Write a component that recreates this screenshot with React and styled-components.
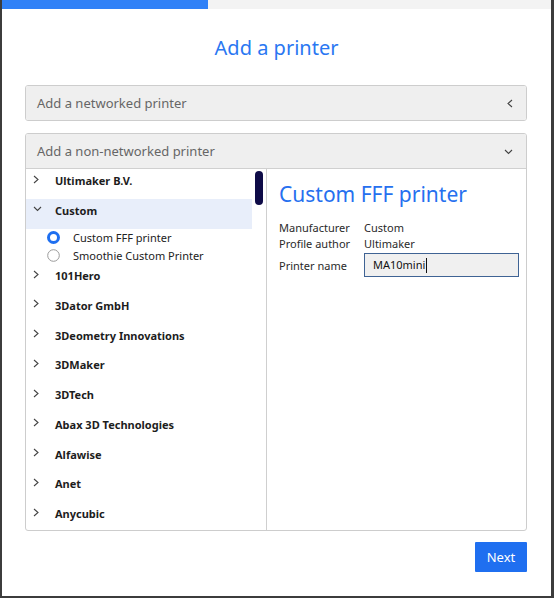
import React from 'react';
import styled, { createGlobalStyle } from 'styled-components';

const manufacturers = [
  { name: 'Ultimaker B.V.' },
  {
    name: 'Custom',
    open: true,
    printers: [
      { name: 'Custom FFF printer', selected: true },
      { name: 'Smoothie Custom Printer' }
    ]
  },
  { name: '101Hero' },
  { name: '3Dator GmbH' },
  { name: '3Deometry Innovations' },
  { name: '3DMaker' },
  { name: '3DTech' },
  { name: 'Abax 3D Technologies' },
  { name: 'Alfawise' },
  { name: 'Anet' },
  { name: 'Anycubic' }
];

const Chevron = ({ dir }) => {
  const points = {
    right: '1,1 5,4.5 1,8',
    left: '5,1 1,4.5 5,8',
    down: '1,2 4.5,5.5 8,2'
  }[dir];
  const size = dir === 'down' ? [9, 7] : [6, 9];
  return (
    <svg width={size[0]} height={size[1]} viewBox={`0 0 ${size[0]} ${size[1]}`}>
      <polyline points={points} fill="none" stroke="#444" strokeWidth="1.1" />
    </svg>
  );
};

const Radio = ({ checked }) => (
  <svg width="13" height="13" viewBox="0 0 13 13">
    {checked ? (
      <circle cx="6.5" cy="6.5" r="5" fill="#fff" stroke="#1e6ff0" strokeWidth="3" />
    ) : (
      <circle cx="6.5" cy="6.5" r="5.8" fill="#fff" stroke="#9a9a9a" strokeWidth="1" />
    )}
  </svg>
);

export default function App() {
  return (
    <>
      <GlobalStyle />
      <Window>
        <Progress>
          <ProgressFill style={{ width: 206 }} />
        </Progress>
        <Title>Add a printer</Title>
        <Body>
          <Section>
            <SectionHeader>
              Add a networked printer
              <Chevron dir="left" />
            </SectionHeader>
          </Section>
          <Section grow>
            <SectionHeader>
              Add a non-networked printer
              <Chevron dir="down" />
            </SectionHeader>
            <Content>
              <TreePane>
                <Scrollbar />
                {manufacturers.map(m => (
                  <React.Fragment key={m.name}>
                    <TreeRow active={m.open}>
                      <Arrow>
                        <Chevron dir={m.open ? 'down' : 'right'} />
                      </Arrow>
                      {m.name}
                    </TreeRow>
                    {m.printers &&
                      m.printers.map(p => (
                        <PrinterRow key={p.name}>
                          <Radio checked={p.selected} />
                          {p.name}
                        </PrinterRow>
                      ))}
                  </React.Fragment>
                ))}
              </TreePane>
              <DetailPane>
                <PrinterTitle>Custom FFF printer</PrinterTitle>
                <Fields>
                  <Label>Manufacturer</Label>
                  <Value>Custom</Value>
                  <Label>Profile author</Label>
                  <Value>Ultimaker</Value>
                  <Label tall>Printer name</Label>
                  <NameInput>
                    MA10mini
                    <Caret />
                  </NameInput>
                </Fields>
              </DetailPane>
            </Content>
          </Section>
        </Body>
        <Footer>
          <NextButton>Next</NextButton>
        </Footer>
      </Window>
    </>
  );
}

const GlobalStyle = createGlobalStyle`
  body {
    margin: 0;
    background: #3c3c3c;
    font-family: "Noto Sans", "Open Sans", sans-serif;
  }
`;

const Window = styled.div`
  margin-left: 2px;
  width: 549px;
  height: 596px;
  background: #fff;
  display: flex;
  flex-direction: column;
`;

const Progress = styled.div`
  height: 9px;
  background: #f3f3f3;
`;

const ProgressFill = styled.div`
  height: 100%;
  background: #3081f7;
`;

const Title = styled.h1`
  margin: 25px 0 0;
  text-align: center;
  font-size: 20px;
  font-weight: 400;
  line-height: 28px;
  color: #2a77f2;
`;

const Body = styled.div`
  flex: 1;
  display: flex;
  flex-direction: column;
  gap: 12px;
  padding: 23px 24px 0 23px;
`;

const Section = styled.div`
  display: flex;
  flex-direction: column;
  border: 1px solid #cdcdcd;
  border-radius: 3px;
  overflow: hidden;
  height: ${p => (p.grow ? '398px' : '36px')};
  box-sizing: border-box;
`;

const SectionHeader = styled.div`
  height: 34px;
  flex: none;
  display: flex;
  align-items: center;
  justify-content: space-between;
  padding: 0 13px 0 11px;
  background: #efefef;
  color: #666;
  font-size: 13px;
`;

const Content = styled.div`
  flex: 1;
  display: flex;
  border-top: 1px solid #d0d0d0;
`;

const TreePane = styled.div`
  position: relative;
  flex: none;
  width: 240px;
  border-right: 1px solid #cfcfcf;
  overflow: hidden;
`;

const Scrollbar = styled.div`
  position: absolute;
  top: 2px;
  right: 3px;
  width: 8px;
  height: 34px;
  border-radius: 4px;
  background: #0e0b47;
`;

const TreeRow = styled.div`
  height: 29.75px;
  width: 226px;
  box-sizing: border-box;
  display: flex;
  align-items: flex-start;
  padding-top: 4px;
  font-size: 11px;
  line-height: 16px;
  font-weight: 700;
  color: #1d1d1d;
  background: ${p => (p.active ? '#e8eefa' : 'transparent')};
`;

const Arrow = styled.span`
  width: 29px;
  padding-left: 7px;
  box-sizing: border-box;
  display: flex;
  align-items: center;
  height: 12px;
`;

const PrinterRow = styled.div`
  height: 17.75px;
  display: flex;
  align-items: center;
  gap: 13px;
  padding-left: 21px;
  font-size: 11px;
  color: #222;
`;

const DetailPane = styled.div`
  flex: 1;
  min-width: 0;
  padding: 10px 12px 0;
`;

const PrinterTitle = styled.h2`
  margin: 0 0 11px;
  font-size: 21px;
  font-weight: 400;
  line-height: 30px;
  color: #2670ef;
`;

const Fields = styled.div`
  display: grid;
  grid-template-columns: 85px 155px;
  font-size: 11px;
  line-height: 16px;
  color: #2a2a2a;
`;

const Label = styled.div`
  align-self: center;
  margin-top: ${p => (p.tall ? '2px' : 0)};
`;

const Value = styled.div``;

const NameInput = styled.div`
  margin-top: 1px;
  height: 24px;
  box-sizing: border-box;
  border: 1px solid #3f6394;
  background: #f0f0f0;
  padding: 0 8px;
  display: flex;
  align-items: center;
  color: #111;
  font-size: 11px;
`;

const Caret = styled.span`
  width: 1px;
  height: 15px;
  margin-left: 1px;
  background: #111;
`;

const Footer = styled.div`
  display: flex;
  justify-content: flex-end;
  padding: 11px 24px 24px 0;
`;

const NextButton = styled.button`
  width: 52px;
  height: 30px;
  border: none;
  border-radius: 1px;
  background: #1f6ff0;
  color: #fff;
  font-family: inherit;
  font-size: 13px;
`;
